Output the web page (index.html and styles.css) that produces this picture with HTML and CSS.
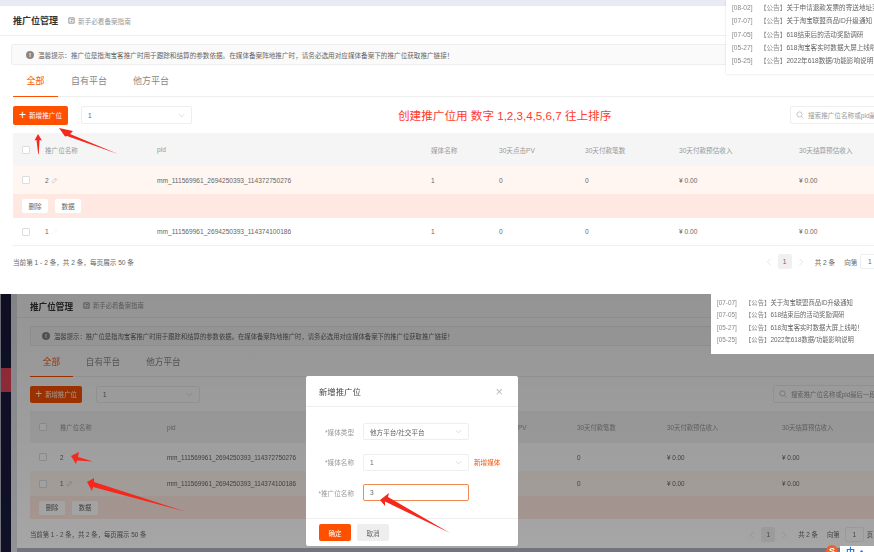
FILE: index.html
```html
<!DOCTYPE html>
<html lang="zh-CN">
<head>
    <meta charset="UTF-8">
    <meta name="viewport" content="width=device-width, initial-scale=1.0">
    <title>推广位管理</title>
    <link rel="stylesheet" href="styles.css">
</head>
<body>
    <svg class="defs" width="0" height="0">
        <symbol id="chevron" viewBox="0 0 10 6"><path d="M1 1l4 4 4-4" fill="none" stroke="currentColor" stroke-width="1"/></symbol>
        <symbol id="pencil" viewBox="0 0 10 10"><path d="M2 8.5l-.5-2 5-5 2 2-5 5zM5.5 2.500l2 2" fill="none" stroke="currentColor" stroke-width=".8"/></symbol>
        <symbol id="guide" viewBox="0 0 8 8"><path d="M1 1h6v6H1zM3 3h3M3 5h2" fill="none" stroke="currentColor" stroke-width=".9"/></symbol>
        <symbol id="search" viewBox="0 0 10 10"><circle cx="4.300" cy="4.300" r="3.200" fill="none" stroke="currentColor" stroke-width=".8"/><path d="M6.700 6.700l2.500 2.500" stroke="currentColor" stroke-width=".8"/></symbol>
    </svg>

    <!-- top shot -->
    <section class="panel panel-top">
        <div class="topbar"></div>
        <div class="card">
            <div class="page-head">
                <h1>推广位管理</h1>
                <span class="guide"><svg class="icon-guide"><use href="#guide"/></svg>新手必看备案指南</span>
            </div>
            <div class="tip"><i class="tip-icon">!</i>温馨提示：推广位是指淘宝客推广时用于跟踪和结算的参数依据。在媒体备案阵地推广时，请务必选用对应媒体备案下的推广位获取推广链接！</div>
            <div class="tabs">
                <span class="tab active">全部</span>
                <span class="tab">自有平台</span>
                <span class="tab">他方平台</span>
            </div>
            <div class="toolbar">
                <button class="btn-add"><b>+</b>新增推广位</button>
                <div class="select">1<svg class="chevron"><use href="#chevron"/></svg></div>
                <span class="caption">创建推广位用 数字 1,2,3,4,5,6,7 往上排序</span>
                <div class="search"><svg class="icon-search"><use href="#search"/></svg>搜索推广位名称或pid最后一段数字</div>
            </div>
            <div class="row row-head">
                <span class="check"></span><span>推广位名称</span><span>pid</span><span>媒体名称</span><span>30天点击PV</span><span>30天付款笔数</span><span>30天付款预估收入</span><span>30天结算预估收入</span>
            </div>
            <div class="row row-hover">
                <span class="check"></span><span>2<svg class="pencil"><use href="#pencil"/></svg></span><span>mm_111569961_2694250393_114372750276</span><span>1</span><span>0</span><span>0</span><span>¥ 0.00</span><span>¥ 0.00</span>
            </div>
            <div class="row-actions"><button>删除</button><button>数据</button></div>
            <div class="row row-last">
                <span class="check"></span><span>1<svg class="pencil faint"><use href="#pencil"/></svg></span><span>mm_111569961_2694250393_114374100186</span><span>1</span><span>0</span><span>0</span><span>¥ 0.00</span><span>¥ 0.00</span>
            </div>
            <div class="table-foot">
                <span>当前第 1 - 2 条，共 2 条，每页展示 50 条</span>
                <div class="pager">
                    <svg class="page-arrow prev"><use href="#chevron"/></svg><span class="page-num">1</span><svg class="page-arrow next"><use href="#chevron"/></svg>
                    <span class="page-total">共 2 条</span><span class="page-go">向第</span><span class="page-input">1</span><span>页</span>
                </div>
            </div>
        </div>
        <ul class="notices">
            <li><span>[08-02]</span><em>【公告】</em>关于申请退款发票的寄送地址变更通知</li>
            <li><span>[07-07]</span><em>【公告】</em>关于淘宝联盟商品ID升级通知</li>
            <li><span>[07-05]</span><em>【公告】</em>618结束后的活动奖励调研</li>
            <li><span>[05-27]</span><em>【公告】</em>618淘宝客实时数据大屏上线啦！</li>
            <li><span>[05-25]</span><em>【公告】</em>2022年618数据/功能影响说明</li>
        </ul>
        <svg class="arrows" width="874" height="294">
            <polygon points="38,134 42,140.500 39.500,140 38.800,154 38.200,154 36.500,140 34.500,140.500"/>
            <polygon points="59,128 73,131 70,134 118,154 67,136 65,136.500"/>
        </svg>
    </section>

    <!-- bottom shot, with dialog open -->
    <section class="panel panel-bottom">
        <div class="sidebar"><div class="sidebar-active"></div></div>
        <div class="page-gutter"></div>
        <div class="card">
            <div class="page-head">
                <h1>推广位管理</h1>
                <span class="guide"><svg class="icon-guide"><use href="#guide"/></svg>新手必看备案指南</span>
            </div>
            <div class="tip"><i class="tip-icon">!</i>温馨提示：推广位是指淘宝客推广时用于跟踪和结算的参数依据。在媒体备案阵地推广时，请务必选用对应媒体备案下的推广位获取推广链接！</div>
            <div class="tabs">
                <span class="tab active">全部</span>
                <span class="tab">自有平台</span>
                <span class="tab">他方平台</span>
            </div>
            <div class="toolbar">
                <button class="btn-add"><b>+</b>新增推广位</button>
                <div class="select">1<svg class="chevron"><use href="#chevron"/></svg></div>
                <div class="search"><svg class="icon-search"><use href="#search"/></svg>搜索推广位名称或pid最后一段数字</div>
            </div>
            <div class="row row-head">
                <span class="check"></span><span>推广位名称</span><span>pid</span><span>媒体名称</span><span>30天点击PV</span><span>30天付款笔数</span><span>30天付款预估收入</span><span>30天结算预估收入</span>
            </div>
            <div class="row">
                <span class="check"></span><span>2</span><span>mm_111569961_2694250393_114372750276</span><span>1</span><span>0</span><span>0</span><span>¥ 0.00</span><span>¥ 0.00</span>
            </div>
            <div class="row row-hover">
                <span class="check"></span><span>1<svg class="pencil"><use href="#pencil"/></svg></span><span>mm_111569961_2694250393_114374100186</span><span>1</span><span>0</span><span>0</span><span>¥ 0.00</span><span>¥ 0.00</span>
            </div>
            <div class="row-actions"><button>删除</button><button>数据</button></div>
            <div class="table-foot">
                <span>当前第 1 - 2 条，共 2 条，每页展示 50 条</span>
                <div class="pager">
                    <svg class="page-arrow prev"><use href="#chevron"/></svg><span class="page-num">1</span><svg class="page-arrow next"><use href="#chevron"/></svg>
                    <span class="page-total">共 2 条</span><span class="page-go">向第</span><span class="page-input">1</span><span>页</span>
                </div>
            </div>
        </div>
        <div class="dim"></div>
        <ul class="notices">
            <li><span>[07-07]</span><em>【公告】</em>关于淘宝联盟商品ID升级通知</li>
            <li><span>[07-05]</span><em>【公告】</em>618结束后的活动奖励调研</li>
            <li><span>[05-27]</span><em>【公告】</em>618淘宝客实时数据大屏上线啦！</li>
            <li><span>[05-25]</span><em>【公告】</em>2022年618数据/功能影响说明</li>
        </ul>
        <div class="modal">
            <div class="modal-head"><span>新增推广位</span><i class="modal-close">×</i></div>
            <div class="modal-body">
                <div class="field"><label>*媒体类型</label><div class="select">他方平台/社交平台<svg class="chevron"><use href="#chevron"/></svg></div></div>
                <div class="field"><label>*媒体名称</label><div class="select">1<svg class="chevron"><use href="#chevron"/></svg></div><a>新增媒体</a></div>
                <div class="field"><label>*推广位名称</label><div class="select focused">3</div></div>
            </div>
            <div class="modal-foot"><button class="ok">确定</button><button class="cancel">取消</button></div>
        </div>
        <svg class="arrows" width="874" height="258">
            <polygon points="71,162 79,158 78,163 93,167.500 77,166.500 76,170"/>
            <polygon points="87,188 94,184 94,188 185,217.500 93,193 92,197"/>
            <polygon points="380,206 389,199 388,203 450,239 385,207.500 385,212"/>
        </svg>
        <div class="ime"><i>S</i><span>中</span><span>•,</span></div>
    </section>
</body>
</html>
```

FILE: styles.css
```css
:root {
    --orange: #ff5000;
    --text: #666;
    --muted: #999;
    --line: #eee;
}

* {
    box-sizing: border-box;
}

body {
    margin: 0;
    width: 874px;
    height: 552px;
    overflow: hidden;
    background: white;
    color: var(--text);
    font-family: "Liberation Sans", "Noto Sans CJK SC", sans-serif;
}

button {
    font: inherit;
    border: none;
    padding: 0;
}

ul {
    list-style: none;
    margin: 0;
    padding: 0;
}

.defs {
    position: absolute;
}

.panel {
    position: relative;
    width: 874px;
    overflow: hidden;
}

.panel-top {
    height: 294px;
    font-size: 6.6px;
    filter: blur(.45px);
    --left: 13px;
    --cols: 32px 112px 274px 68px 86px 94px 120px 1fr;
}

.panel-bottom {
    display: flex;
    height: 258px;
    font-size: 6.35px;
    background: #b0b2c0;
    filter: blur(.6px);
    --left: 13px;
    --cols: 30px 107px 263px 62px 85px 90px 115px 1fr;
}

.topbar {
    height: 6px;
    background: #e8ebf3;
}

.card {
    width: 910px;
    flex: none;
    background: white;
}

.panel-bottom .card {
    width: 893px;
    height: 254px;
}

.sidebar {
    flex: none;
    width: 10px;
    margin-left: 1px;
    padding-top: 74px;
    background: #181a3c;
}

.sidebar-active {
    height: 24px;
    background: #e8455c;
}

.page-gutter {
    flex: none;
    width: 6px;
    background: #e0e1e8;
}

.page-head {
    display: flex;
    align-items: center;
    height: 30px;
    padding-left: var(--left);
    border-bottom: 1px solid var(--line);
}

.panel-bottom .page-head {
    height: 24px;
}

h1 {
    margin: 0 10px 0 0;
    font-size: 9px;
    color: #333;
}

.panel-bottom h1 {
    font-size: 8.6px;
}

.guide {
    display: flex;
    align-items: center;
    color: var(--muted);
}

.icon-guide {
    width: 7px;
    height: 7px;
    margin-right: 3px;
    color: #777;
}

.tip {
    display: flex;
    align-items: center;
    height: 21px;
    margin: 8px 0 0 11px;
    padding-left: 14px;
    background: #fafafa;
    border: 1px solid var(--line);
    border-radius: 2px;
}

.panel-bottom .tip {
    height: 20px;
    margin-left: var(--left);
    padding-left: 11px;
}

.tip-icon {
    width: 8px;
    height: 8px;
    margin-right: 4px;
    border-radius: 50%;
    background: #888;
    color: white;
    font: bold 6px/8px "Liberation Sans", sans-serif;
    text-align: center;
}

.tabs {
    display: flex;
    height: 32px;
    margin-left: var(--left);
    border-bottom: 1px solid var(--line);
    font-size: 9px;
    color: #888;
}

.panel-bottom .tabs {
    height: 31px;
    font-size: 8.6px;
}

.tab {
    display: flex;
    align-items: center;
    padding: 0 13px;
    margin-bottom: -1px;
    border-bottom: 1px solid transparent;
}

.tab.active {
    padding: 0 13.500px;
    color: var(--orange);
    border-bottom-color: var(--orange);
}

.panel-bottom .tab.active {
    padding: 0 12.800px;
}

.toolbar {
    display: flex;
    align-items: center;
    height: 36px;
    padding-left: var(--left);
}

.panel-bottom .toolbar {
    height: 34px;
}

.btn-add {
    display: flex;
    align-items: center;
    justify-content: center;
    width: 55px;
    height: 19px;
    margin-right: 13px;
    background: var(--orange);
    border-radius: 2px;
    color: white;
}

.panel-bottom .btn-add {
    width: 52px;
    height: 17px;
    margin-right: 14px;
}

.btn-add b {
    margin-right: 3px;
    font-size: 12px;
    font-weight: normal;
    line-height: 1;
}

.select {
    display: flex;
    align-items: center;
    justify-content: space-between;
    width: 111px;
    height: 18px;
    padding: 0 6px;
    background: white;
    border: 1px solid var(--line);
    border-radius: 2px;
}

.panel-bottom .toolbar .select {
    width: 104px;
    height: 17px;
}

.chevron {
    width: 7px;
    height: 5px;
    color: #ccc;
}

.caption {
    margin-left: 206px;
    font-size: 11.600px;
    color: #ff3a2e;
}

.search {
    display: flex;
    align-items: center;
    width: 120px;
    height: 18px;
    margin-left: auto;
    padding-left: 5px;
    border: 1px solid var(--line);
    border-radius: 2px;
    color: var(--muted);
    white-space: nowrap;
    overflow: hidden;
}

.panel-bottom .search {
    width: 137px;
}

.icon-search {
    flex: none;
    width: 8px;
    height: 8px;
    margin-right: 4px;
    color: #aaa;
}

.row {
    display: grid;
    grid-template-columns: var(--cols);
    align-items: center;
    height: 28px;
    margin-left: var(--left);
}

.row-head {
    height: 33px;
    background: #f5f5f5;
    color: var(--muted);
}

.panel-bottom .row-head {
    height: 32px;
}

.row-hover {
    background: #fff6f1;
}

.panel-bottom .row-hover {
    height: 25px;
}

.row-last {
    border-bottom: 1px solid #eef0f4;
}

.row span:not(.check) {
    white-space: nowrap;
}

.check {
    width: 8px;
    height: 8px;
    margin-left: 9px;
    background: white;
    border: 1px solid #ddd;
    border-radius: 1px;
}

.pencil {
    width: 7px;
    height: 7px;
    margin-left: 2px;
    vertical-align: -1px;
    color: #bbb;
}

.pencil.faint {
    color: #f0f0f0;
}

.row-actions {
    display: flex;
    align-items: center;
    gap: 7px;
    height: 24px;
    margin-left: var(--left);
    padding-left: 9px;
    background: #ffe8e1;
}

.panel-bottom .row-actions {
    height: 23px;
}

.row-actions button {
    width: 26px;
    height: 14px;
    background: white;
    border-radius: 2px;
    color: var(--text);
}

.table-foot {
    display: flex;
    align-items: center;
    height: 31px;
    padding: 0 21px 0 var(--left);
}

.panel-bottom .table-foot {
    height: 31px;
    padding-right: 37px;
}

.pager {
    display: flex;
    align-items: center;
    margin-left: auto;
}

.page-arrow {
    width: 8px;
    height: 6px;
    color: #ddd;
}

.prev {
    transform: rotate(90deg);
}

.next {
    transform: rotate(-90deg);
}

.page-num {
    width: 14px;
    height: 15px;
    margin: 0 5px;
    background: #f0f0f0;
    border-radius: 2px;
    line-height: 15px;
    text-align: center;
}

.page-total {
    margin: 0 9px 0 10px;
}

.page-input {
    width: 19px;
    height: 15px;
    margin: 0 3px;
    border: 1px solid var(--line);
    border-radius: 2px;
    line-height: 13px;
    text-align: center;
}

.panel-bottom .page-input {
    margin-left: 5px;
}

/* things lying over the page */
.notices {
    position: absolute;
    top: 0;
    left: 726px;
    width: 160px;
    height: 74px;
    padding: 1px 0 0 6px;
    background: white;
    box-shadow: 0 0 2px rgba(0, 0, 0, .15);
    font-size: 6.6px;
    white-space: nowrap;
}

.panel-bottom .notices {
    left: 711px;
    width: 180px;
    height: 60px;
    padding-top: 3px;
    font-size: 6.35px;
    box-shadow: none;
    z-index: 2;
}

.notices li {
    height: 13.300px;
    line-height: 13.300px;
}

.panel-bottom .notices li {
    height: 12.400px;
    line-height: 12.400px;
}

.notices span {
    display: inline-block;
    width: 28px;
    color: #888;
}

.notices em {
    font-style: normal;
    color: #888;
}

.arrows {
    position: absolute;
    top: 0;
    left: 0;
    z-index: 4;
    fill: #f5281e;
}

.dim {
    position: absolute;
    inset: 0;
    background: linear-gradient(rgba(0, 0, 0, .42), rgba(0, 0, 0, .35));
    z-index: 1;
}

.modal {
    position: absolute;
    top: 82px;
    left: 306px;
    display: flex;
    flex-direction: column;
    width: 212px;
    height: 170px;
    background: white;
    border-radius: 2px;
    font-size: 6.6px;
    z-index: 3;
}

.modal-head {
    display: flex;
    align-items: center;
    justify-content: space-between;
    height: 31px;
    padding: 0 15px 0 13px;
    border-bottom: 1px solid var(--line);
    font-size: 8.4px;
    color: #444;
}

.modal-close {
    font: normal 13px/1 "Liberation Sans", sans-serif;
    color: #bbb;
}

.modal-body {
    flex: 1;
    display: flex;
    flex-direction: column;
    gap: 13.500px;
    padding-top: 16px;
}

.field {
    display: flex;
    align-items: center;
    height: 17px;
}

.field label {
    width: 48px;
    margin-right: 9px;
    color: var(--muted);
    text-align: right;
}

.field .select {
    width: 106px;
    height: 17px;
}

.field .focused {
    border-color: #f08a50;
}

.field a {
    margin-left: 5px;
    color: var(--orange);
}

.modal-foot {
    display: flex;
    align-items: center;
    gap: 6px;
    height: 28px;
    padding-left: 13px;
    border-top: 1px solid var(--line);
}

.modal-foot button {
    width: 32px;
    height: 17px;
    border-radius: 2px;
}

.modal-foot .ok {
    background: var(--orange);
    color: white;
}

.modal-foot .cancel {
    background: #eee;
    color: var(--text);
}

.ime {
    position: absolute;
    top: 252px;
    left: 826px;
    display: flex;
    gap: 5px;
    width: 48px;
    height: 12px;
    padding-left: 20px;
    color: #2a6fd6;
    font-size: 9px;
    font-weight: bold;
    line-height: 12px;
    z-index: 4;
}

.ime::before {
    content: "";
    position: absolute;
    top: 0;
    left: 14px;
    right: 0;
    bottom: 0;
    z-index: -1;
    background: white;
}

.ime i {
    position: absolute;
    left: 0;
    top: -1px;
    width: 12px;
    height: 12px;
    border-radius: 50%;
    background: #f0602a;
    color: white;
    font-style: normal;
    text-align: center;
}
```
